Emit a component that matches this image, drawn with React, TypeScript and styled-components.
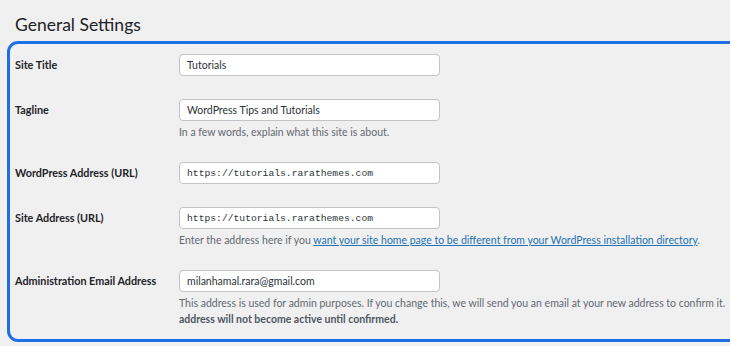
import React from "react";
import styled, { createGlobalStyle } from "styled-components";

const Global = createGlobalStyle`
  html, body { margin: 0; padding: 0; background: #f0f0f1; overflow: hidden; }
  body { font-family: Lato, "Open Sans", sans-serif; color: #1d2327; }
`;

const Page = styled.div`
  width: 730px;
  height: 346px;
  padding: 0 0 0 7px;
  box-sizing: border-box;
  overflow: hidden;
`;

const Title = styled.h1`
  margin: 0;
  padding: 13px 0 0 8px;
  height: 41px;
  box-sizing: border-box;
  font-size: 17.5px;
  font-weight: 400;
  line-height: 24px;
  color: #1d2327;
`;

const Box = styled.div`
  width: 760px;
  border: 3px solid #1e6fe3;
  border-radius: 11px;
  padding: 0 0 0 5px;
  box-sizing: border-box;
`;

const Row = styled.div<{ $top: number; $bottom: number }>`
  display: grid;
  grid-template-columns: 164px 1fr;
  padding: ${(p) => `${p.$top}px 0 ${p.$bottom}px`};
`;

const Label = styled.div`
  font-size: 10.8px;
  font-weight: 700;
  line-height: 22px;
  color: #1d2327;
`;

const Field = styled.div`
  display: flex;
  flex-direction: column;
`;

const Input = styled.div<{ $mono?: boolean }>`
  width: 261px;
  height: 22px;
  box-sizing: border-box;
  background: #fff;
  border: 1px solid #c3c4c7;
  border-radius: 4px;
  padding: 0 7px;
  display: flex;
  align-items: center;
  font-family: ${(p) => (p.$mono ? '"Liberation Mono", monospace' : 'Lato, sans-serif')};
  font-size: ${(p) => (p.$mono ? "9.7px" : "10.5px")};
  color: #2c3338;
`;

const Desc = styled.p`
  margin: 3px 0 0;
  font-size: 10.5px;
  line-height: 16px;
  color: #646970;
  white-space: nowrap;
`;

const Link = styled.a`
  color: #2271b1;
  text-decoration: underline;
`;

const Strong = styled.span`
  font-weight: 700;
  color: #50575e;
`;

export default function App() {
  return (
    <Page>
      <Global />
      <Title>General Settings</Title>
      <Box>
        <Row $top={10} $bottom={12}>
          <Label>Site Title</Label>
          <Field>
            <Input>Tutorials</Input>
          </Field>
        </Row>
        <Row $top={11} $bottom={11}>
          <Label>Tagline</Label>
          <Field>
            <Input>WordPress Tips and Tutorials</Input>
            <Desc>In a few words, explain what this site is about.</Desc>
          </Field>
        </Row>
        <Row $top={11} $bottom={12}>
          <Label>WordPress Address (URL)</Label>
          <Field>
            <Input $mono>https://tutorials.rarathemes.com</Input>
          </Field>
        </Row>
        <Row $top={11} $bottom={11}>
          <Label>Site Address (URL)</Label>
          <Field>
            <Input $mono>https://tutorials.rarathemes.com</Input>
            <Desc>
              Enter the address here if you{" "}
              <Link>want your site home page to be different from your WordPress installation directory</Link>.
            </Desc>
          </Field>
        </Row>
        <Row $top={11} $bottom={12}>
          <Label>Administration Email Address</Label>
          <Field>
            <Input>milanhamal.rara@gmail.com</Input>
            <Desc>
              This address is used for admin purposes. If you change this, we will send you an email at your new address to confirm it.
              <br />
              <Strong>address will not become active until confirmed.</Strong>
            </Desc>
          </Field>
        </Row>
      </Box>
    </Page>
  );
}
